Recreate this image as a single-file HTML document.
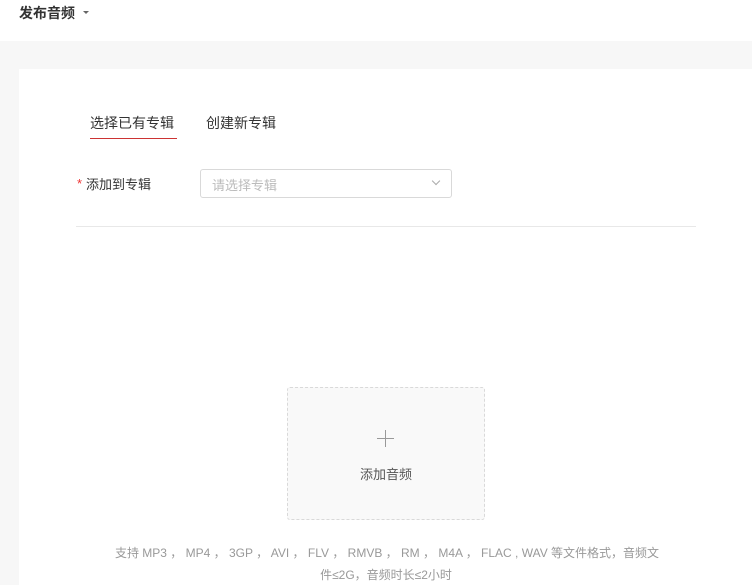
<!DOCTYPE html>
<html><head><meta charset="utf-8"><style>
*{margin:0;padding:0;box-sizing:border-box}
body{width:752px;height:585px;overflow:hidden;background:#f7f7f7;font-family:"Liberation Sans","Noto Sans CJK SC",sans-serif;position:relative}
.hdr{position:absolute;left:0;top:0;width:752px;height:41px;background:#fff}
.title{position:absolute;left:19px;top:3px;font-size:14px;font-weight:bold;color:#333}
.caret{position:absolute;left:83px;top:11px;width:0;height:0;border-left:3px solid transparent;border-right:3px solid transparent;border-top:3px solid #666}
.card{position:absolute;left:19px;top:69px;width:733px;height:516px;background:#fff}
.t{position:absolute;font-size:14px;color:#333}
.ul{position:absolute;left:90px;top:138px;width:87px;height:1px;background:#c33}
.star{position:absolute;left:77px;top:176px;color:#e33;font-size:13px}
.sel{position:absolute;left:200px;top:169px;width:252px;height:29px;border:1px solid #d9d9d9;border-radius:3px}
.sel span{position:absolute;left:11px;top:5px;font-size:13px;color:#bbb}
.chev{position:absolute;left:232px;top:8px;width:6px;height:6px;border-right:1px solid #aaa;border-bottom:1px solid #aaa;transform:rotate(45deg)}
.hr{position:absolute;left:76px;top:226px;width:620px;height:1px;background:#e8e8e8}
.up{position:absolute;left:287px;top:387px;width:198px;height:133px;border:1px dashed #d9d9d9;border-radius:3px;background:#f9f9f9}
.ph{position:absolute;left:377px;top:438px;width:17px;height:1px;background:#999}
.pv{position:absolute;left:385px;top:430px;width:1px;height:17px;background:#999}
.ut{position:absolute;left:0;width:752px;text-align:center;font-size:12px;color:#999}
</style></head><body>
<div class="hdr"><div class="title">发布音频</div><div class="caret"></div></div>
<div class="card"></div>
<div class="t" style="left:90px;top:113px">选择已有专辑</div>
<div class="t" style="left:206px;top:113px">创建新专辑</div>
<div class="ul"></div>
<div class="star">*</div>
<div class="t" style="left:86px;top:174px;font-size:13px">添加到专辑</div>
<div class="sel"><span>请选择专辑</span><div class="chev"></div></div>
<div class="hr"></div>
<div class="up"></div>
<div class="ph"></div><div class="pv"></div>
<div class="ut" style="left:0;top:464px;font-size:13px;color:#555;width:772px">添加音频</div>
<div class="ut" style="top:544px;left:0;width:774px">支持 MP3 ， MP4 ， 3GP ， AVI ， FLV ， RMVB ， RM ， M4A ， FLAC , WAV 等文件格式，音频文</div>
<div class="ut" style="top:566px;width:772px">件≤2G，音频时长≤2小时</div>
</body></html>
